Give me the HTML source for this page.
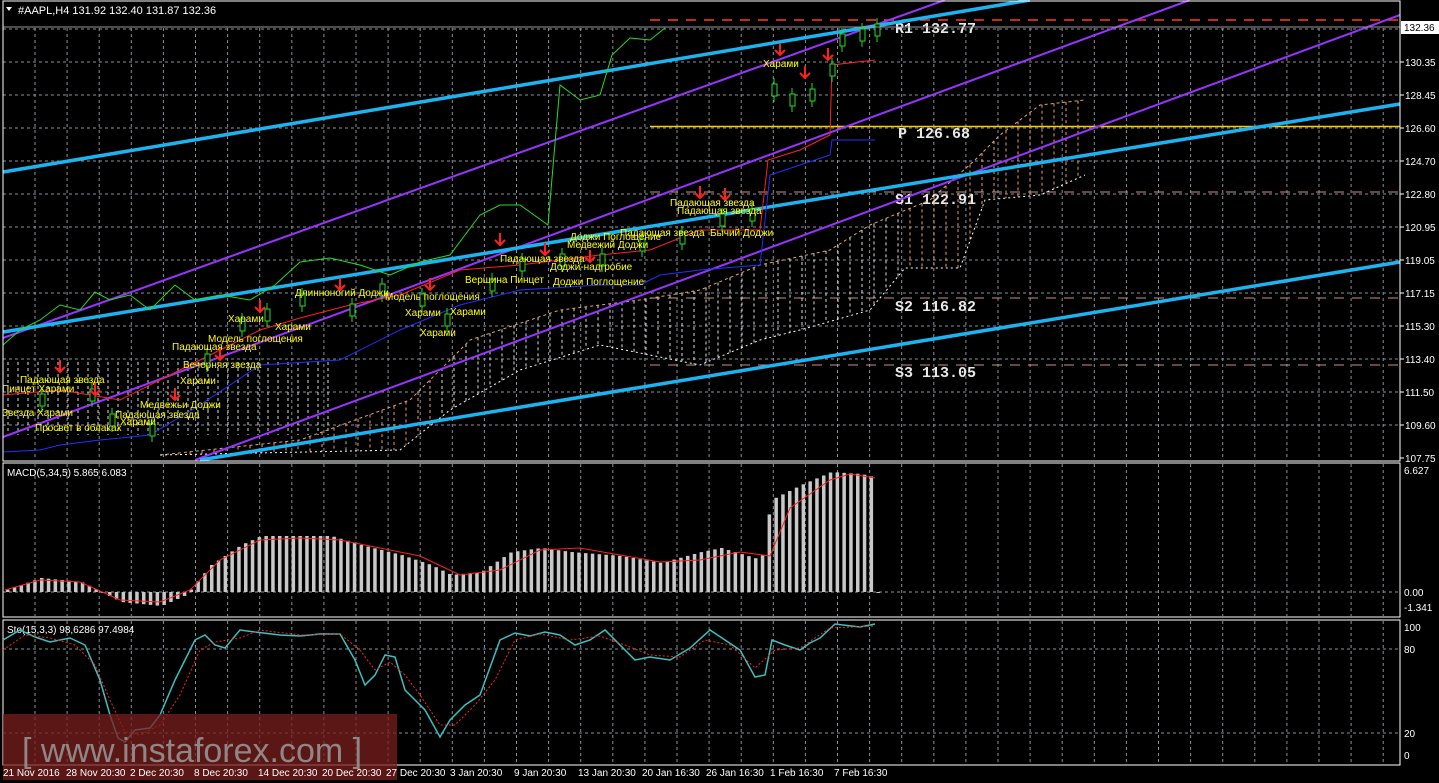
<!DOCTYPE html><html><head><meta charset="utf-8"><style>
html,body{margin:0;padding:0;background:#000;width:1439px;height:783px;overflow:hidden}
svg{display:block}
text{font-family:"Liberation Sans",sans-serif}
text.mono{font-family:"Liberation Mono",monospace}
</style></head><body>
<svg id="s" width="1439" height="783" xmlns="http://www.w3.org/2000/svg">
<rect width="1439" height="783" fill="#000"/>
<g id="grid" stroke="#8a8f99" stroke-dasharray="3,3" stroke-width="1"></g>
<line x1="650" y1="20" x2="1400" y2="20" stroke="#ff3b1a" stroke-dasharray="10,8" stroke-width="1.5"/>
<line x1="650" y1="126.5" x2="1400" y2="126.5" stroke="#ffcc00" stroke-width="1.5"/>
<line x1="650" y1="192" x2="1400" y2="192" stroke="#c89088" stroke-dasharray="10,8"/>
<line x1="650" y1="298" x2="1400" y2="298" stroke="#c89088" stroke-dasharray="10,8"/>
<line x1="650" y1="365" x2="1400" y2="365" stroke="#c89088" stroke-dasharray="10,8"/>
<g font-weight="bold" font-size="15" fill="#e8e8e8">
<text class="mono" x="895" y="33">R1 132.77</text><text class="mono" x="898" y="138">P 126.68</text>
<text class="mono" x="895" y="204">S1 122.91</text><text class="mono" x="895" y="311">S2 116.82</text><text class="mono" x="895" y="377">S3 113.05</text></g>
<g id="cloud" stroke-dasharray="3,3" stroke-width="1"></g>
<polyline id="ctop" fill="none" stroke="#e8a070" stroke-dasharray="3,3"/>
<polyline id="cbot" fill="none" stroke="#fff" stroke-dasharray="2,3"/>
<g stroke-width="2" stroke="#9933ff">
<line x1="3" y1="338" x2="945" y2="0"/><line x1="3" y1="437" x2="1190" y2="0"/><line x1="195" y1="460" x2="1400" y2="15"/></g>
<g stroke-width="3.5" stroke="#1cb4f0">
<line x1="3" y1="172" x2="1030" y2="0"/><line x1="3" y1="332" x2="1400" y2="104"/><line x1="200" y1="460" x2="1400" y2="262"/></g>
<polyline fill="none" stroke="#22dd22" stroke-width="1" points="3,345 20,330 40,320 60,305 80,310 95,292 110,300 130,295 150,310 175,285 195,300 220,295 250,300 275,285 300,262 330,258 360,265 390,275 420,262 450,255 480,215 500,205 520,205 548,225 560,85 580,100 600,95 612,55 630,38 650,40 665,28"/>
<polyline fill="none" stroke="#ff2020" stroke-width="1" points="3,395 60,390 120,400 180,370 230,345 260,330 300,318 350,305 400,295 460,270 520,265 600,255 650,250 700,230 760,230 768,160 800,150 830,135 832,65 875,60"/>
<polyline fill="none" stroke="#2030ff" stroke-width="1" points="3,452 40,450 60,445 100,440 150,435 200,405 260,365 340,360 400,330 460,305 520,290 600,285 640,285 660,275 700,270 760,265 770,175 800,165 830,155 832,140 875,140"/>
<g id="candles"></g>
<g id="labels" font-size="10" fill="#ffff00"></g>
<line x1="3" y1="27" x2="1400" y2="27" stroke="#9a9a9a"/>
<rect x="3" y="1" width="1397" height="460" fill="none" stroke="#fff"/>
<rect x="3" y="463" width="1397" height="154" fill="none" stroke="#fff"/>
<rect x="3" y="620" width="1397" height="145" fill="none" stroke="#fff"/>
<polygon points="6,7 12,7 9,11" fill="#fff"/>
<text x="18" y="14" font-size="11" fill="#fff">#AAPL,H4  131.92 132.40 131.87 132.36</text>
<g id="axis" font-size="10" fill="#fff"></g>
<rect x="1401" y="21" width="38" height="13" fill="#fff"/>
<text x="1404" y="31" font-size="10" fill="#000">132.36</text>
<text x="7" y="476" font-size="10" fill="#fff">MACD(5,34,5) 5.865 6.083</text>
<g id="macd" fill="#c8c8c8"></g>
<polyline fill="none" stroke="#ff2020" points="5,590 40,580 80,582 120,600 160,602 190,590 220,560 260,540 300,538 340,540 380,548 420,556 460,575 500,570 540,550 580,548 620,555 660,562 700,560 740,552 770,556 790,508 830,480 850,474 875,478"/>
<text x="7" y="633" font-size="10" fill="#fff">Sto(15,3,3) 98,6286 97.4984</text>
<polyline fill="none" stroke="#3cc0c0" stroke-width="1.5" points="3,640 20,630 35,637 50,642 70,638 85,645 100,680 110,715 118,738 125,742 135,730 150,728 160,715 175,680 195,640 205,635 215,645 225,648 240,630 255,632 280,635 300,636 320,634 340,634 355,660 365,685 375,675 385,655 395,657 405,690 415,700 425,710 440,737 450,720 465,705 480,695 500,640 515,633 530,636 545,632 560,635 575,645 590,640 605,630 620,645 635,660 650,657 670,660 690,648 710,630 725,640 740,650 755,677 765,675 772,640 785,645 800,650 810,643 820,638 835,624 860,627 875,624"/>
<polyline fill="none" stroke="#ff2020" stroke-dasharray="2,2" points="3,650 25,635 50,638 75,645 95,665 110,700 125,732 140,735 160,725 180,695 200,650 215,642 240,638 260,630 300,635 340,634 360,650 375,670 390,662 405,675 420,695 440,725 455,725 475,705 495,680 515,640 540,634 570,640 600,636 625,645 650,655 680,657 705,640 730,645 755,668 775,650 800,648 830,628 875,626"/>
<line x1="3" y1="765" x2="1400" y2="765" stroke="#fff"/>
<rect x="3" y="714" width="394" height="66" fill="#7a1e1e" opacity="0.75"/>
<text x="22" y="762" font-size="34" fill="#9a9a9a" opacity="0.85">[ www.instaforex.com ]</text>
<g id="dates" font-size="10" fill="#fff"></g>
</svg>
<script>
(function(){
var NS="http://www.w3.org/2000/svg";
function el(p,t,a,txt){var e=document.createElementNS(NS,t);for(var k in a)e.setAttribute(k,a[k]);if(txt)e.textContent=txt;document.getElementById(p).appendChild(e);return e;}
for(var x=35;x<1400;x+=32.1){el("grid","line",{x1:x,y1:28,x2:x,y2:460});el("grid","line",{x1:x,y1:464,x2:x,y2:616});el("grid","line",{x1:x,y1:621,x2:x,y2:764});}
var lab=["130.35","128.45","126.60","124.70","122.80","120.95","119.05","117.15","115.30","113.40","111.50","109.60","107.75"];
for(var i=0;i<13;i++){var y=62+i*33; if(i<12)el("grid","line",{x1:3,y1:y,x2:1400,y2:y});el("axis","text",{x:1405,y:y+4},lab[i]);el("axis","line",{x1:1400,y1:y,x2:1404,y2:y,stroke:"#fff"});}
el("grid","line",{x1:3,y1:29,x2:1400,y2:29});
el("grid","line",{x1:3,y1:592,x2:1400,y2:592});el("grid","line",{x1:3,y1:649,x2:1400,y2:649});el("grid","line",{x1:3,y1:733,x2:1400,y2:733});
[["6.627",474],["0.00",596],["-1.341",611],["100",631],["80",653],["20",737],["0",759]].forEach(function(a){el("axis","text",{x:1404,y:a[1]},a[0]);});
function lerp(pts,x){for(var i=0;i<pts.length-1;i++){if(x>=pts[i][0]&&x<=pts[i+1][0]){var f=(x-pts[i][0])/(pts[i+1][0]-pts[i][0]);return pts[i][1]+f*(pts[i+1][1]-pts[i][1]);}}return null;}
var tp=[[160,455],[300,440],[410,400],[470,340],[560,310],[640,300],[700,290],[760,265],[830,250],[870,225],[930,200],[975,160],[1000,135],[1040,105],[1085,100]];
var bt=[[160,455],[400,450],[450,410],[520,370],[600,345],[700,365],[760,340],[800,330],[870,310],[905,268],[960,268],[985,200],[1040,195],[1085,175]];
document.getElementById("ctop").setAttribute("points",tp.map(function(p){return p.join(",")}).join(" "));
document.getElementById("cbot").setAttribute("points",bt.map(function(p){return p.join(",")}).join(" "));
for(var x=166;x<1085;x+=12){var a=lerp(tp,x),b=lerp(bt,x);if(a==null||b==null)continue;el("cloud","line",{x1:x,y1:Math.min(a,b),x2:x,y2:Math.max(a,b),stroke:(x>900||x<440)?"#e8a070":"#ddd"});}
for(var x=8;x<330;x+=10){el("cloud","line",{x1:x,y1:362,x2:x,y2:435,stroke:"#ddd"});}
var mv=[[5,590],[40,578],[80,582],[100,592],[120,602],[160,606],[185,595],[210,565],[240,545],[260,536],[330,536],[360,545],[400,555],[430,565],[450,575],[480,572],[510,552],[540,548],[570,552],[620,556],[660,563],[700,552],[720,548],[760,560],[770,500],[800,485],[830,472],[860,474],[876,478]];
for(var x=6;x<877;x+=6.8){var v=lerp(mv,x);if(v==null)v=592;var y=Math.min(v,592),h=Math.abs(592-v);el("macd","rect",{x:x,y:y,width:3.5,height:Math.max(h,1)});}
var cs=[[40,400],[90,395],[110,420],[150,430],[205,360],[240,325],[265,315],[300,300],[350,310],[380,290],[420,300],[445,320],[490,285],[520,265],[560,260],[600,260],[640,245],[680,238],[720,220],[750,215],[772,90],[790,100],[810,95],[830,70],[840,40],[860,35],[875,30]];
cs.forEach(function(c){el("candles","line",{x1:c[0]+2,y1:c[1]-12,x2:c[0]+2,y2:c[1]+12,stroke:"#22dd22"});el("candles","rect",{x:c[0],y:c[1]-6,width:5,height:12,fill:"#000",stroke:"#22dd22"});});
[[60,372],[95,395],[175,400],[220,360],[260,312],[340,290],[430,290],[500,245],[545,255],[590,262],[700,198],[725,200],[780,55],[805,78],[828,60]].forEach(function(a){el("candles","path",{d:"M"+a[0]+" "+(a[1]-12)+"V"+a[1]+"M"+(a[0]-5)+" "+(a[1]-5)+"L"+a[0]+" "+a[1]+"L"+(a[0]+5)+" "+(a[1]-5),stroke:"#ff2020","stroke-width":2,fill:"none"});});
var L=[[20,383,"Падающая звезда"],[2,392,"Пинцет Харами"],[2,416,"Звезда Харами"],[35,431,"Просвет в облаках"],[115,418,"Падающая звезда"],[140,408,"Медвежьи Доджи"],[120,425,"Харами"],[180,384,"Харами"],[183,368,"Вечерняя звезда"],[172,350,"Падающая звезда"],[208,342,"Модель поглощения"],[228,322,"Харами"],[275,330,"Харами"],[295,296,"Длинноногий Доджи"],[385,300,"Модель поглощения"],[405,316,"Харами"],[420,336,"Харами"],[450,315,"Харами"],[465,283,"Вершина Пинцет"],[500,262,"Падающая звезда"],[550,270,"Доджи-надгробие"],[553,285,"Доджи Поглощение"],[567,248,"Медвежий Доджи"],[570,240,"Доджи Поглощение"],[620,236,"Падающая звезда"],[670,206,"Падающая звезда"],[677,214,"Падающая звезда"],[710,236,"Бычий Доджи"],[763,67,"Харами"]];
L.forEach(function(a){el("labels","text",{x:a[0],y:a[1]},a[2]);});
var D=[["21 Nov 2016",3],["28 Nov 20:30",66],["2 Dec 20:30",130],["8 Dec 20:30",194],["14 Dec 20:30",258],["20 Dec 20:30",322],["27 Dec 20:30",386],["3 Jan 20:30",450],["9 Jan 20:30",514],["13 Jan 20:30",578],["20 Jan 16:30",642],["26 Jan 16:30",706],["1 Feb 16:30",770],["7 Feb 16:30",834]];
D.forEach(function(d){el("dates","text",{x:d[1],y:776},d[0]);});
})();
</script>
</body></html>
